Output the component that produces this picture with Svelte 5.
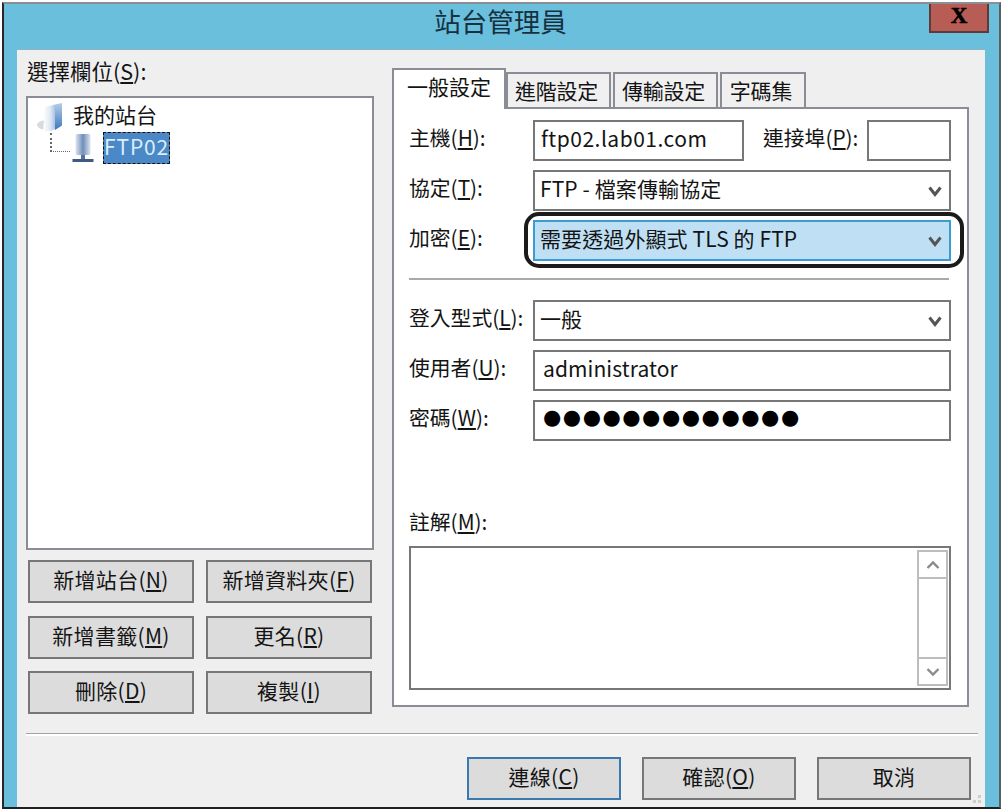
<script>
  const sideButtons = [
    ['新增站台(', 'N', ')'],
    ['新增資料夾(', 'F', ')'],
    ['新增書籤(', 'M', ')'],
    ['更名(', 'R', ')'],
    ['刪除(', 'D', ')'],
    ['複製(', 'I', ')']
  ];
  const footerButtons = [
    { a: '連線(', k: 'C', b: ')', primary: true },
    { a: '確認(', k: 'O', b: ')', primary: false },
    { a: '取消', k: '', b: '', primary: false }
  ];
  const tabs = ['進階設定', '傳輸設定', '字碼集'];
</script>

{#snippet chevron()}
  <svg class="chev" viewBox="0 0 14 12" aria-hidden="true"><path d="M1.5 2.5 7 9.5l5.5-7" fill="none" stroke="#555" stroke-width="3"/></svg>
{/snippet}

<div class="win">
  <header class="titlebar">
    <span></span>
    <h1>站台管理員</h1>
    <button class="close">X</button>
  </header>

  <main class="body">
    <div class="top">
      <section class="left">
        <div class="left-label">選擇欄位(<u>S</u>):</div>
        <div class="tree">
          <div class="node root">
            <svg class="folder" viewBox="0 0 26 28" aria-hidden="true">
              <defs>
                <linearGradient id="fg" x1="0" x2="1" y1="0" y2="0">
                  <stop offset="0" stop-color="#ffffff"/>
                  <stop offset="0.6" stop-color="#dfe9f4"/>
                  <stop offset="1" stop-color="#a9c4e3"/>
                </linearGradient>
                <linearGradient id="fb" x1="0" x2="0" y1="0" y2="1">
                  <stop offset="0" stop-color="#b4cde8"/>
                  <stop offset="1" stop-color="#3f78bd"/>
                </linearGradient>
              </defs>
              <ellipse cx="8" cy="22" rx="8" ry="4.5" fill="#d8dade"/>
              <path d="M8 4 18 1.500v24.500l-4 2H6z" fill="url(#fg)"/>
              <path d="M18 1.500 25 0v22.500l-7 4.500z" fill="url(#fb)"/>
            </svg>
            <span class="root-text">我的站台</span>
          </div>
          <div class="node child">
            <span class="conn"></span>
            <svg class="server" viewBox="0 0 22 30" aria-hidden="true">
              <defs>
                <linearGradient id="sg" x1="0" x2="1" y1="0" y2="0">
                  <stop offset="0" stop-color="#dfe6f0"/>
                  <stop offset="0.5" stop-color="#6f8fb8"/>
                  <stop offset="1" stop-color="#dce5f0"/>
                </linearGradient>
              </defs>
              <rect x="3.500" y="1" width="15" height="21" rx="1.500" fill="url(#sg)"/>
              <rect x="9" y="22" width="4" height="4" fill="#55719c"/>
              <rect x="0.500" y="26" width="21" height="3" fill="#3f5a85"/>
            </svg>
            <span class="selected">FTP02</span>
          </div>
        </div>
        <div class="side-buttons">
          {#each sideButtons as b}
            <button class="btn">{b[0]}<u>{b[1]}</u>{b[2]}</button>
          {/each}
        </div>
      </section>

      <section class="right">
        <div class="tabs">
          <div class="tab active">一般設定</div>
          {#each tabs as t}
            <div class="tab">{t}</div>
          {/each}
        </div>
        <div class="panel">
          <div class="row">
            <label>主機(<u>H</u>):</label>
            <div class="host-fields">
              <div class="field host">ftp02.lab01.com</div>
              <label class="port-label">連接埠(<u>P</u>):</label>
              <div class="field port"></div>
            </div>
          </div>
          <div class="row">
            <label>協定(<u>T</u>):</label>
            <div class="field select"><span>FTP - 檔案傳輸協定</span>{@render chevron()}</div>
          </div>
          <div class="row last">
            <label>加密(<u>E</u>):</label>
            <div class="highlight">
              <div class="field select on"><span>需要透過外顯式 TLS 的 FTP</span>{@render chevron()}</div>
            </div>
          </div>
          <div class="divider"></div>
          <div class="row">
            <label>登入型式(<u>L</u>):</label>
            <div class="field select"><span>一般</span>{@render chevron()}</div>
          </div>
          <div class="row">
            <label>使用者(<u>U</u>):</label>
            <div class="field">administrator</div>
          </div>
          <div class="row">
            <label>密碼(<u>W</u>):</label>
            <div class="field dots">●●●●●●●●●●●●●</div>
          </div>
          <div class="note-label">註解(<u>M</u>):</div>
          <div class="note">
            <div class="scroll">
              <div class="arrow up"><svg viewBox="0 0 14 10" aria-hidden="true"><path d="M1.500 8 7 2.500 12.500 8" fill="none" stroke="#8a8a8a" stroke-width="2.400"/></svg></div>
              <div class="track"></div>
              <div class="arrow down"><svg viewBox="0 0 14 10" aria-hidden="true"><path d="M1.500 2 7 7.500 12.500 2" fill="none" stroke="#8a8a8a" stroke-width="2.400"/></svg></div>
            </div>
          </div>
        </div>
      </section>
    </div>

    <div class="sep"></div>

    <footer class="footer">
      {#each footerButtons as b}
        <button class="btn" class:primary={b.primary}>{b.a}{#if b.k}<u>{b.k}</u>{/if}{b.b}</button>
      {/each}
    </footer>
    <svg class="grip" viewBox="0 0 12 12" aria-hidden="true"><path d="M8 0h3v3H8zM8 5h3v3H8zM3 5h3v3H3z" fill="#cdcdcd"/></svg>
  </main>
</div>

<style>
  :global(body) {
    margin: 0;
    background: #fff;
  }
  * {
    box-sizing: border-box;
  }
  .win {
    position: relative;
    width: 999px;
    height: 807px;
    margin: 2px 0 0 2px;
    background: #6abfdd;
    border-top: 2px solid #8b8f94;
    border-left: 2px solid #2a2527;
    border-right: 2px solid #5a5f63;
    border-bottom: 2px solid #231f20;
    font-family: "Noto Sans CJK TC", "Noto Sans", sans-serif;
    font-size: 21px;
    line-height: 1.2;
    color: #141414;
  }
  .titlebar {
    height: 45px;
    display: grid;
    grid-template-columns: 1fr auto 1fr;
    align-items: start;
  }
  h1 {
    margin: 0;
    font-size: 26.500px;
    font-weight: 400;
    line-height: 34px;
    color: #16303d;
    transform: translateX(-1px);
  }
  .close {
    justify-self: end;
    width: 60px;
    height: 29px;
    margin: 0 10px 0 0;
    padding: 0 0 9px;
    background: #b85c56;
    border: 2px solid #5e3a38;
    border-top: 0;
    font-family: "Liberation Serif", serif;
    font-size: 23px;
    font-weight: 700;
    line-height: 1;
    color: #000;
    -webkit-text-stroke: 0.6px #000;
  }
  .body {
    position: relative;
    width: 968px;
    height: 758px;
    margin-left: 13px;
    background: #efefef;
    border-top: 1px solid #8fb3c4;
  }
  .top {
    display: flex;
    height: 683px;
  }
  .left {
    width: 375px;
    padding-left: 9px;
  }
  .left-label {
    height: 46px;
    padding: 8px 0 0 1px;
    line-height: 26px;
    font-size: 21.500px;
  }
  .tree {
    width: 348px;
    height: 454px;
    background: #fff;
    border: 2px solid #8a8d96;
    padding: 3px 0 0 9px;
  }
  .node {
    display: flex;
    align-items: center;
    position: relative;
  }
  .root {
    height: 31px;
    gap: 10px;
  }
  .root-text {
    margin-top: -4px;
  }
  .folder {
    width: 26px;
    height: 28px;
    flex: none;
  }
  .child {
    height: 32px;
    padding-left: 35px;
  }
  .conn {
    position: absolute;
    left: 13px;
    top: 1px;
    width: 20px;
    height: 19px;
    border-left: 2px dotted #666;
    border-bottom: 1px dotted #666;
  }
  .server {
    width: 22px;
    height: 30px;
    flex: none;
    margin-right: 9px;
  }
  .selected {
    display: block;
    width: 67px;
    height: 32px;
    line-height: 26px;
    text-align: center;
    background: #4a88c7;
    color: #dceef9;
    border: 1px dashed #c8701c;
    outline: 1px dashed #111;
    outline-offset: -1px;
    letter-spacing: 0.800px;
  }
  .side-buttons {
    display: grid;
    grid-template-columns: 166px 166px;
    grid-template-rows: 56px 55px 43px;
    column-gap: 12px;
    margin: 10px 0 0 2px;
  }
  .btn {
    height: 43px;
    padding: 0 0 4px;
    background: #dcdcdc;
    border: 2px solid #777;
    font: inherit;
    color: inherit;
    line-height: 1;
    white-space: nowrap;
    letter-spacing: 0.300px;
  }
  .right {
    width: 577px;
    padding-top: 17px;
  }
  .tabs {
    display: flex;
    align-items: flex-end;
    height: 40px;
  }
  .tab {
    height: 35px;
    width: 105px;
    margin-right: 2px;
    padding-right: 4px;
    background: #f0f0f0;
    border: 2px solid #8a8d96;
    border-bottom: 0;
    text-align: center;
    line-height: 33px;
    letter-spacing: -0.200px;
  }
  .tab:nth-child(4) {
    width: 86px;
  }
  .tab.active {
    position: relative;
    z-index: 1;
    width: 114px;
    height: 41px;
    margin: 0 0 -2px;
    padding-right: 0;
    background: #fff;
    line-height: 32px;
    letter-spacing: 0;
  }
  .panel {
    width: 577px;
    height: 600px;
    background: #fff;
    border: 2px solid #8a8d96;
    padding: 11px 16px 0 15px;
  }
  .row {
    display: grid;
    grid-template-columns: 124px 418px;
    align-items: center;
    height: 41px;
    margin-bottom: 9px;
  }
  .row.last {
    margin-bottom: 0;
  }
  label {
    display: block;
    white-space: nowrap;
    font-size: 20.800px;
    margin-top: -6px;
  }
  .field {
    display: flex;
    align-items: center;
    height: 41px;
    padding: 0 8px 4px;
    background: #fff;
    border: 2px solid #777;
    white-space: nowrap;
    font-size: 21px;
    letter-spacing: 0.100px;
  }
  .host-fields {
    display: flex;
    align-items: center;
  }
  .host {
    width: 211px;
    padding-left: 6px;
    letter-spacing: 0.500px;
  }
  .port-label {
    margin: -6px 0 0 19px;
    width: 104px;
  }
  .port {
    width: 84px;
  }
  .select {
    justify-content: space-between;
    padding-left: 5px;
  }
  .chev {
    width: 14px;
    height: 12px;
    flex: none;
    margin: 4px -1px 0 0;
  }
  .highlight {
    position: relative;
  }
  .highlight::after {
    content: "";
    position: absolute;
    left: -9px;
    right: -13px;
    top: -8px;
    bottom: -7px;
    border: 4px solid #1c1a1b;
    border-radius: 15px;
    pointer-events: none;
  }
  .on {
    background: #bfe0f4;
    border-color: #3c9bd0;
  }
  .divider {
    width: 540px;
    height: 2px;
    margin-top: 17px;
    margin-bottom: 20px;
    background: #a9a9a9;
  }
  .dots {
    font-family: "DejaVu Sans", sans-serif;
    font-size: 21px;
    letter-spacing: 1.500px;
    padding: 0 0 5px 8px;
    color: #000;
  }
  .note-label {
    height: 30px;
    margin-top: 67px;
    line-height: 26px;
    font-size: 20.800px;
  }
  .note {
    display: flex;
    justify-content: flex-end;
    width: 542px;
    height: 144px;
    margin-top: 8px;
    border: 2px solid #777;
    padding: 2px 1px 2px 0;
  }
  .scroll {
    display: flex;
    flex-direction: column;
    width: 31px;
    border: 2px solid #bdbdbd;
  }
  .arrow {
    height: 27px;
    display: flex;
    align-items: center;
    justify-content: center;
    flex: none;
  }
  .arrow svg {
    width: 14px;
    height: 10px;
  }
  .up {
    border-bottom: 2px solid #bdbdbd;
  }
  .down {
    border-top: 2px solid #bdbdbd;
  }
  .track {
    flex: 1;
  }
  .sep {
    width: 952px;
    height: 3px;
    margin-left: 9px;
    background: #fff;
    border-top: 1px solid #a3a3a3;
  }
  .footer {
    display: flex;
    justify-content: flex-end;
    gap: 21px;
    padding: 21px 14px 0 0;
  }
  .footer .btn {
    width: 154px;
  }
  .primary {
    border-color: #3a79ad;
  }
  .grip {
    position: absolute;
    right: 3px;
    bottom: 0;
    width: 12px;
    height: 12px;
  }
</style>
